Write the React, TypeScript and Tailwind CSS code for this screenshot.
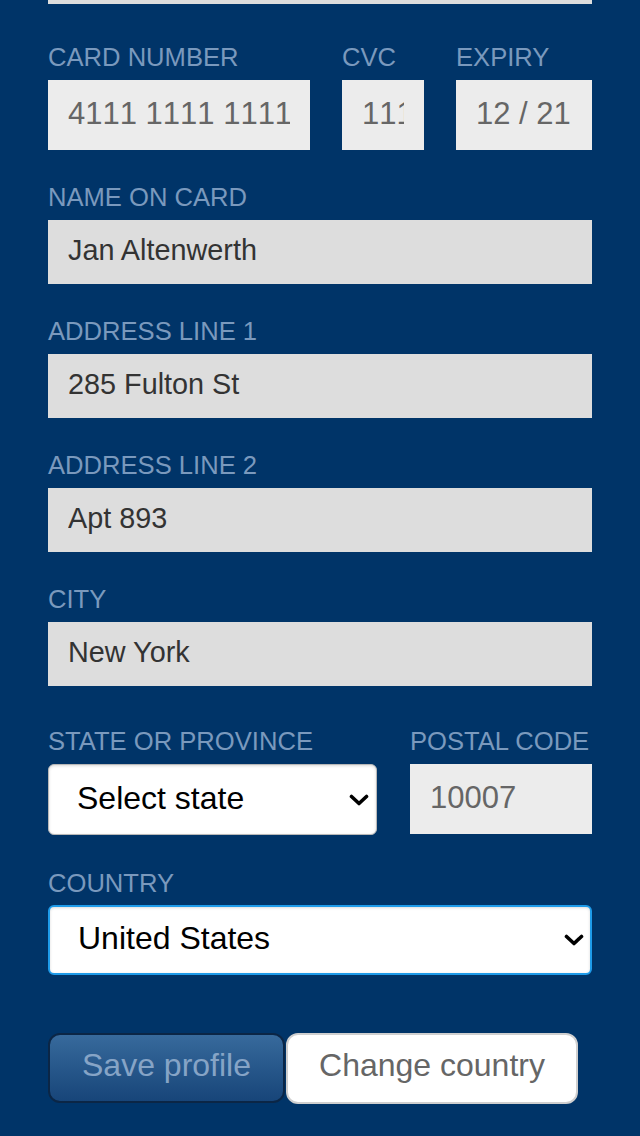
import React from "react";

const labelCls =
  "block h-[26px] text-[25.6px] leading-[26px] uppercase text-[#7a99bd] whitespace-nowrap";

function Chevron() {
  return (
    <svg
      className="pointer-events-none absolute right-[8px] top-1/2 -translate-y-1/2"
      width="20"
      height="12"
      viewBox="0 0 20 12"
    >
      <path d="M2.5 2.5 L10 9.5 L17.5 2.5" fill="none" stroke="#000" strokeWidth="3.6" strokeLinecap="round" strokeLinejoin="round" />
    </svg>
  );
}

export default function App() {
  const cardInput =
    "block w-full h-[70px] bg-[#ececec] text-[#666666] text-[31px] px-[20px] pb-[2px] outline-none border-0 [font-kerning:none]";
  const textInput =
    "block w-full h-[64px] bg-[#dddddd] text-[#333333] text-[28.8px] px-[20px] pb-[4px] outline-none border-0";
  return (
    <div className="min-h-[1136px] bg-[#003468] px-12 font-['Liberation_Sans',Arial,sans-serif]">
      <div className="h-1 bg-[#dddddd]" />

      <div className="mt-10 flex gap-8">
        <div className="w-[262px]">
          <label className={labelCls + " mb-[10px]"}>Card number</label>
          <input className={cardInput} readOnly value="4111 1111 1111 1111" />
        </div>
        <div className="w-[82px]">
          <label className={labelCls + " mb-[10px]"}>CVC</label>
          <input className={cardInput} readOnly value="111" />
        </div>
        <div className="flex-1">
          <label className={labelCls + " mb-[10px]"}>Expiry</label>
          <input className={cardInput} readOnly value="12 / 21" />
        </div>
      </div>

      <div className="mt-[34px]">
        <label className={labelCls + " mb-[10px]"}>Name on card</label>
        <input className={textInput} readOnly value="Jan Altenwerth" />
      </div>

      <div className="mt-[34px]">
        <label className={labelCls + " mb-[10px]"}>Address line 1</label>
        <input className={textInput} readOnly value="285 Fulton St" />
      </div>

      <div className="mt-[34px]">
        <label className={labelCls + " mb-[10px]"}>Address line 2</label>
        <input className={textInput} readOnly value="Apt 893" />
      </div>

      <div className="mt-[34px]">
        <label className={labelCls + " mb-[10px]"}>City</label>
        <input className={textInput} readOnly value="New York" />
      </div>

      <div className="mt-[42px] flex gap-[33px]">
        <div className="w-[329px]">
          <label className={labelCls + " mb-[10px]"}>State or province</label>
          <div className="relative">
            <select
              className="block w-full h-[71px] appearance-none bg-white text-black text-[32px] pl-[28px] pr-[36px] pb-[4px] rounded-[6px] border border-[#b8b8b8] shadow-[inset_0_1px_3px_rgba(0,0,0,0.15)] outline-none"
              defaultValue="Select state"
            >
              <option>Select state</option>
            </select>
            <Chevron />
          </div>
        </div>
        <div className="flex-1">
          <label className={labelCls + " mb-[10px]"}>Postal code</label>
          <input className={cardInput} readOnly value="10007" />
        </div>
      </div>

      <div className="mt-[35px]">
        <label className={labelCls + " mb-[9px]"}>Country</label>
        <div className="relative">
          <select
            className="block w-full h-[70px] appearance-none bg-white text-black text-[32px] pl-[28px] pr-[36px] pb-[4px] rounded-[6px] border-2 border-[#1e9be9] shadow-[inset_0_1px_3px_rgba(0,0,0,0.15)] outline-none"
            defaultValue="United States"
          >
            <option>United States</option>
          </select>
          <Chevron />
        </div>
      </div>

      <div className="mt-[58px] flex gap-[1px]">
        <button className="w-[237px] h-[70px] pb-[7px] rounded-[12px] border-2 border-[#0b2646] bg-gradient-to-b from-[#376a9c] to-[#174579] text-[32px] text-[#86a4c6]">
          Save profile
        </button>
        <button className="w-[292px] h-[71px] pb-[7px] rounded-[12px] border-2 border-[#cfcfcf] bg-white text-[32px] text-[#666666]">
          Change country
        </button>
      </div>
    </div>
  );
}
